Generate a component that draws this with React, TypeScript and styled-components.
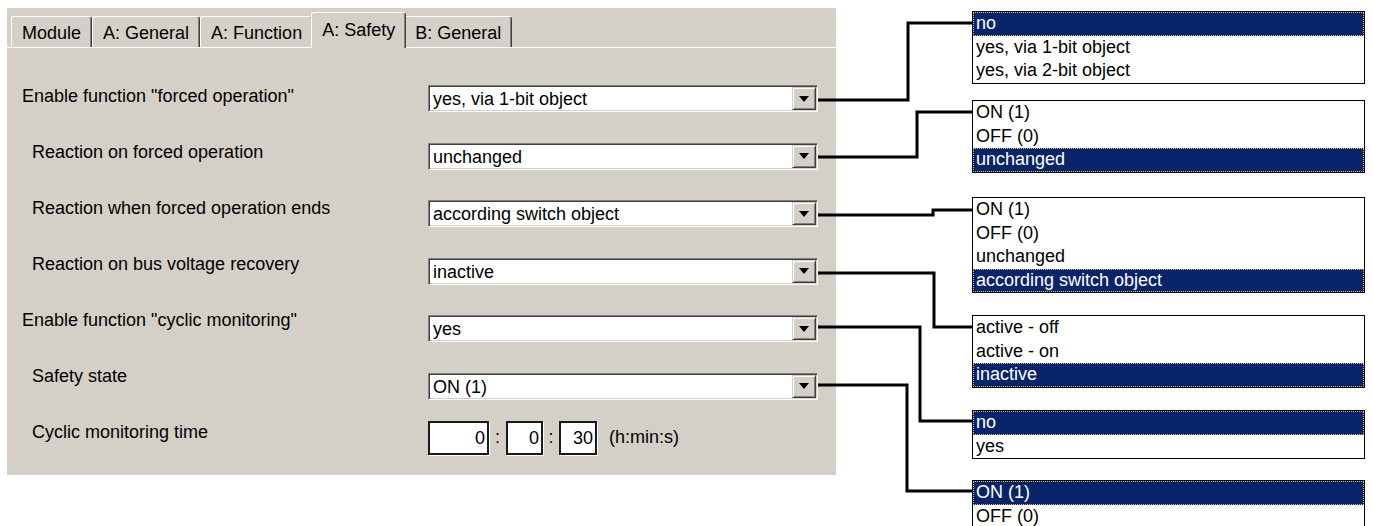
import React from "react";
import styled, { createGlobalStyle } from "styled-components";

const Global = createGlobalStyle`
  html, body { margin: 0; padding: 0; background: #ffffff; }
  body {
    font-family: "Liberation Sans", Arial, sans-serif;
    font-size: 18px;
    color: #000000;
  }
`;

const Page = styled.div`
  position: relative;
  width: 1373px;
  height: 526px;
  overflow: hidden;
  display: flex;
  align-items: flex-start;
`;

const Panel = styled.div`
  margin: 8px 0 0 7px;
  width: 829px;
  height: 467px;
  background: #d4d0c8;
  display: flex;
  flex-direction: column;
`;

const TabStrip = styled.div`
  display: flex;
  align-items: flex-end;
  height: 40px;
  box-sizing: border-box;
  padding-left: 4px;
  border-bottom: 1px solid #ffffff;
`;

const Tab = styled.div<{ $active?: boolean }>`
  position: relative;
  box-sizing: border-box;
  height: ${(p) => (p.$active ? 36 : 31)}px;
  margin: 0 ${(p) => (p.$active ? -2 : 0)}px ${(p) => (p.$active ? -1 : 0)}px;
  padding: ${(p) => (p.$active ? "0 10px 1px" : "3px 10px 0")};
  display: flex;
  align-items: center;
  background: #d4d0c8;
  border-top: 1px solid #ffffff;
  border-left: 1px solid #ffffff;
  border-right: 1px solid #404040;
  box-shadow: inset -1px 0 0 #808080;
  border-radius: 3px 3px 0 0;
  z-index: ${(p) => (p.$active ? 2 : 1)};
  white-space: nowrap;
`;

const Body = styled.div`
  display: flex;
  padding-left: 15px;
`;

const LabelCol = styled.div`
  width: 406px;
  padding-top: 20px;
  display: flex;
  flex-direction: column;
`;

const Label = styled.div<{ $indent?: boolean }>`
  height: 56px;
  line-height: 56px;
  padding-left: ${(p) => (p.$indent ? 10 : 0)}px;
  white-space: nowrap;
`;

const ControlCol = styled.div`
  padding-top: 37px;
  display: flex;
  flex-direction: column;
  gap: 30.6px;
`;

const Combo = styled.div`
  box-sizing: border-box;
  width: 390px;
  height: 27px;
  display: flex;
  background: #ffffff;
  border: 1px solid;
  border-color: #808080 #ffffff #ffffff #808080;
  box-shadow: inset 1px 1px 0 #404040, inset -1px -1px 0 #d4d0c8;
`;

const ComboText = styled.div`
  flex: 1;
  padding-left: 4px;
  line-height: 26px;
  white-space: nowrap;
`;

const ComboButton = styled.div`
  box-sizing: border-box;
  width: 24px;
  height: 23px;
  margin: 1px;
  background: #d4d0c8;
  border: 1px solid;
  border-color: #d4d0c8 #404040 #404040 #d4d0c8;
  box-shadow: inset 1px 1px 0 #ffffff, inset -1px -1px 0 #808080;
  display: flex;
  align-items: center;
  justify-content: center;
`;

const Arrow = styled.div`
  width: 0;
  height: 0;
  border-left: 5.5px solid transparent;
  border-right: 5.5px solid transparent;
  border-top: 6px solid #000000;
`;

const TimeRow = styled.div`
  margin-top: -9.6px;
  display: flex;
  align-items: center;
  height: 34px;
`;

const TimeBox = styled.div<{ $w: number }>`
  box-sizing: border-box;
  width: ${(p) => p.$w}px;
  height: 34px;
  background: #ffffff;
  border: 2px solid #1a1a1a;
  box-shadow: 1px 1px 0 #ffffff;
  text-align: right;
  padding-right: 2px;
  line-height: 30px;
`;

const Colon = styled.div<{ $w: number }>`
  width: ${(p) => p.$w}px;
  text-align: center;
`;

const Unit = styled.div`
  margin-left: 12px;
  white-space: nowrap;
`;

const ListCol = styled.div`
  margin-left: 136px;
  width: 393px;
  display: flex;
  flex-direction: column;
`;

const ListBox = styled.div<{ $mt: number }>`
  margin-top: ${(p) => p.$mt}px;
  border: 1px solid #000000;
  background: #ffffff;
`;

const Item = styled.div<{ $sel?: boolean }>`
  position: relative;
  height: 23.5px;
  line-height: 23.5px;
  padding-left: 3px;
  white-space: nowrap;
  background: ${(p) => (p.$sel ? "#0a246a" : "#ffffff")};
  color: ${(p) => (p.$sel ? "#ffffff" : "#000000")};
  &::after {
    content: "";
    position: absolute;
    inset: 0;
    border: 1px dotted ${(p) => (p.$sel ? "#d9c46a" : "transparent")};
  }
`;

const Wires = styled.svg`
  position: absolute;
  left: 0;
  top: 0;
  pointer-events: none;
`;

const tabs = ["Module", "A: General", "A: Function", "A: Safety", "B: General"];

const rows: { label: string; indent: boolean; value: string }[] = [
  { label: 'Enable function "forced operation"', indent: false, value: "yes, via 1-bit object" },
  { label: "Reaction on forced operation", indent: true, value: "unchanged" },
  { label: "Reaction when forced operation ends", indent: true, value: "according switch object" },
  { label: "Reaction on bus voltage recovery", indent: true, value: "inactive" },
  { label: 'Enable function "cyclic monitoring"', indent: false, value: "yes" },
  { label: "Safety state", indent: true, value: "ON (1)" },
];

const lists: { mt: number; items: string[]; sel: number }[] = [
  { mt: 11, items: ["no", "yes, via 1-bit object", "yes, via 2-bit object"], sel: 0 },
  { mt: 16.5, items: ["ON (1)", "OFF (0)", "unchanged"], sel: 2 },
  { mt: 24.5, items: ["ON (1)", "OFF (0)", "unchanged", "according switch object"], sel: 3 },
  { mt: 22, items: ["active - off", "active - on", "inactive"], sel: 2 },
  { mt: 22.5, items: ["no", "yes"], sel: 0 },
  { mt: 21, items: ["ON (1)", "OFF (0)"], sel: 0 },
];

const wires = [
  "M818 100 H908 V23 H972",
  "M818 157 H917 V112 H972",
  "M818 215 H933 V210 H972",
  "M818 273 H934 V327 H972",
  "M818 327 H920 V421 H972",
  "M818 385 H907 V491 H972",
];

export default function App() {
  return (
    <Page>
      <Global />
      <Panel>
        <TabStrip>
          {tabs.map((t) => (
            <Tab key={t} $active={t === "A: Safety"}>
              {t}
            </Tab>
          ))}
        </TabStrip>
        <Body>
          <LabelCol>
            {rows.map((r) => (
              <Label key={r.label} $indent={r.indent}>
                {r.label}
              </Label>
            ))}
            <Label $indent>Cyclic monitoring time</Label>
          </LabelCol>
          <ControlCol>
            {rows.map((r) => (
              <Combo key={r.label}>
                <ComboText>{r.value}</ComboText>
                <ComboButton>
                  <Arrow />
                </ComboButton>
              </Combo>
            ))}
            <TimeRow>
              <TimeBox $w={61}>0</TimeBox>
              <Colon $w={17}>:</Colon>
              <TimeBox $w={37}>0</TimeBox>
              <Colon $w={16}>:</Colon>
              <TimeBox $w={38}>30</TimeBox>
              <Unit>(h:min:s)</Unit>
            </TimeRow>
          </ControlCol>
        </Body>
      </Panel>
      <ListCol>
        {lists.map((l, i) => (
          <ListBox key={i} $mt={l.mt}>
            {l.items.map((it, j) => (
              <Item key={j} $sel={j === l.sel}>
                {it}
              </Item>
            ))}
          </ListBox>
        ))}
      </ListCol>
      <Wires width={1373} height={526} viewBox="0 0 1373 526">
        {wires.map((d, i) => (
          <path key={i} d={d} fill="none" stroke="#000" strokeWidth={3} strokeLinejoin="miter" strokeLinecap="butt" />
        ))}
      </Wires>
    </Page>
  );
}
